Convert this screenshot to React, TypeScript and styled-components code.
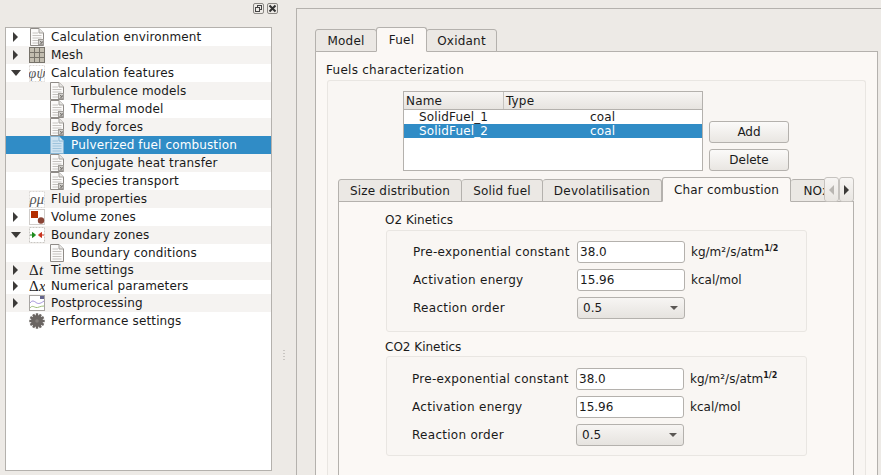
import React, { FC, ReactElement } from 'react';
import styled, { createGlobalStyle } from 'styled-components';

const GlobalStyle = createGlobalStyle`
  html, body {
    margin: 0;
    padding: 0;
    width: 881px;
    height: 475px;
    overflow: hidden;
    background: #edeae6;
  }
  body, input, button {
    font-family: 'DejaVu Sans', Verdana, sans-serif;
    font-size: 12px;
    color: #1a1a1a;
  }
`;

type IconName = 'doc' | 'docPlain' | 'docSelected' | 'grid' | 'phi' | 'rho' | 'volume' | 'boundary' | 'time' | 'numeric' | 'post' | 'gear';

const Gear = () => {
  const teeth = Array.from({ length: 12 }, (_, i) => i * 30);
  return (
    <svg width="16" height="16" viewBox="0 0 16 16">
      {teeth.map((deg) => (
        <rect key={deg} x="6.8" y="0.3" width="2.4" height="3.2" fill="#6a6562" transform={`rotate(${deg} 8 8)`} />
      ))}
      <circle cx="8" cy="8" r="6" fill="#6a6562" />
      <circle cx="8" cy="8" r="1.8" fill="#827d79" />
    </svg>
  );
};

const TreeIcon: FC<{ name: IconName }> = ({ name }): ReactElement => {
  if (name === 'gear') return <Gear />;
  if (name === 'doc' || name === 'docPlain' || name === 'docSelected') {
    const selected = name === 'docSelected';
    const line = selected ? '#9dc3dc' : '#c6c3c0';
    return (
      <svg width="16" height="18" viewBox="0 0 16 18">
        <path d="M1.5 .5H10L14.5 5V17.5H1.5Z" fill={selected ? '#cfe3f1' : '#fbfaf9'} stroke={selected ? '#86b4d3' : '#8f8b87'} />
        <path d="M10 .5V5H14.5" fill={selected ? '#e3eff7' : '#e8e6e3'} stroke={selected ? '#86b4d3' : '#a5a29e'} />
        <path d="M3.5 5H9M3.5 7.5H12.5M3.5 10H12.5M3.5 12.5H12.5M3.5 15H12.5" stroke={line} />
        {name === 'doc' && (
          <g>
            <rect x="9.5" y="11.5" width="5" height="5" fill="#d4d2cf" stroke="#a09d99" />
            <path d="M10.8 12.8L13 15M13.2 13V15.2H11" fill="none" stroke="#7a7773" />
          </g>
        )}
      </svg>
    );
  }
  if (name === 'grid') {
    return (
      <svg width="16" height="16" viewBox="0 0 16 16">
        <rect x=".5" y=".5" width="15" height="15" fill="#c2bdb0" stroke="#77736b" />
        <path d="M5.5 1V15M10.5 1V15M1 5.5H15M1 10.5H15" stroke="#77736b" />
      </svg>
    );
  }
  if (name === 'phi' || name === 'rho') {
    return (
      <svg width="16" height="17" viewBox="0 0 16 17">
        <rect x=".5" y=".5" width="15" height="16" fill="#fff" stroke="#dcd9d6" strokeDasharray="2 1" />
        <text x="8" y="12.5" textAnchor="middle" fontFamily="'Liberation Serif', serif" fontStyle="italic" fontSize="14.5" fill="#555">
          {name === 'phi' ? 'φψ' : 'ρμ'}
        </text>
      </svg>
    );
  }
  if (name === 'volume') {
    return (
      <svg width="16" height="16" viewBox="0 0 16 16">
        <rect x=".5" y=".5" width="15" height="15" fill="#fff" stroke="#d0cdca" />
        <rect x="2" y="2" width="7" height="7" fill="#b32d00" />
        <circle cx="12" cy="11.5" r="3.2" fill="#8a4436" />
      </svg>
    );
  }
  if (name === 'boundary') {
    return (
      <svg width="16" height="16" viewBox="0 0 16 16">
        <rect x=".5" y=".5" width="15" height="15" fill="#fff" stroke="#c9c6c3" strokeDasharray="2 1" />
        <path d="M1 8H4M3.5 5.5L6.5 8L3.5 10.5Z" stroke="#1c8a1c" fill="#1c8a1c" />
        <path d="M12 8H15M12.5 5.5L9.5 8L12.5 10.5Z" stroke="#c8321e" fill="#c8321e" />
      </svg>
    );
  }
  if (name === 'post') {
    return (
      <svg width="16" height="16" viewBox="0 0 16 16">
        <rect x=".5" y=".5" width="15" height="15" fill="#fff" stroke="#a8a5a2" />
        <rect x="11" y="1" width="4" height="3" fill="#64648c" />
        <path d="M1 8C3 5 5 6 7 7.5S11 9 15 6" fill="none" stroke="#9f8fd8" />
        <path d="M1 13C3 10 5 12 7 12.5S11 11 15 11" fill="none" stroke="#9fbf7a" />
      </svg>
    );
  }
  return (
    <svg width="16" height="16" viewBox="0 0 16 16">
      <text x="0" y="13" fontFamily="'Liberation Serif', serif" fontSize="15" fill="#222">Δ</text>
      <text x="10" y="13" fontFamily="'Liberation Serif', serif" fontStyle="italic" fontSize="15" fill="#222">
        {name === 'time' ? 't' : 'x'}
      </text>
    </svg>
  );
};

type TreeEntry = {
  label: string;
  icon: IconName;
  depth?: number;
  arrow?: 'open' | 'closed';
  selected?: boolean;
  height?: number;
  lift?: number;
};

const entries: TreeEntry[] = [
  { label: 'Calculation environment', icon: 'doc', arrow: 'closed' },
  { label: 'Mesh', icon: 'grid', arrow: 'closed' },
  { label: 'Calculation features', icon: 'phi', arrow: 'open' },
  { label: 'Turbulence models', icon: 'doc', depth: 1 },
  { label: 'Thermal model', icon: 'doc', depth: 1 },
  { label: 'Body forces', icon: 'doc', depth: 1 },
  { label: 'Pulverized fuel combustion', icon: 'docSelected', depth: 1, selected: true },
  { label: 'Conjugate heat transfer', icon: 'doc', depth: 1 },
  { label: 'Species transport', icon: 'doc', depth: 1 },
  { label: 'Fluid properties', icon: 'rho' },
  { label: 'Volume zones', icon: 'volume', arrow: 'closed' },
  { label: 'Boundary zones', icon: 'boundary', arrow: 'open' },
  { label: 'Boundary conditions', icon: 'docPlain', depth: 1 },
  { label: 'Time settings', icon: 'time', arrow: 'closed', lift: 3 },
  { label: 'Numerical parameters', icon: 'numeric', arrow: 'closed', height: 14, lift: 3 },
  { label: 'Postprocessing', icon: 'post', arrow: 'closed' },
  { label: 'Performance settings', icon: 'gear' },
];

const FieldRows: FC = () => (
  <>
    <FieldRow>
      <FieldLabel>Pre-exponential constant</FieldLabel>
      <TextBox defaultValue="38.0" />
      <Unit>
        kg/m²/s/atm<Sup>1/2</Sup>
      </Unit>
    </FieldRow>
    <FieldRow>
      <FieldLabel>Activation energy</FieldLabel>
      <TextBox defaultValue="15.96" />
      <Unit>kcal/mol</Unit>
    </FieldRow>
    <FieldRow>
      <FieldLabel>Reaction order</FieldLabel>
      <Combo>
        0.5
        <ComboArrow />
      </Combo>
    </FieldRow>
  </>
);

const App: FC = (): ReactElement => (
  <Page>
    <GlobalStyle />
    <Dock>
      <DockTitle>
        <DockButton>
          <svg width="9" height="9" viewBox="0 0 9 9">
            <rect x="3.5" y="1.5" width="4" height="4" fill="none" stroke="#444" />
            <rect x="1.5" y="3.5" width="4" height="4" fill="#edeae6" stroke="#444" />
          </svg>
        </DockButton>
        <DockButton>
          <svg width="9" height="9" viewBox="0 0 9 9">
            <path d="M1.5 1.5L7.5 7.5M7.5 1.5L1.5 7.5" stroke="#333" strokeWidth="2" />
          </svg>
        </DockButton>
      </DockTitle>
      <Tree>
        {entries.map((entry, index) => (
          <TreeRow
            key={entry.label}
            $alt={index % 2 === 1}
            $selected={entry.selected}
            $depth={entry.depth ?? 0}
            $height={entry.height ?? 18}
            $lift={entry.lift ?? 0}
          >
            <ArrowSlot>{entry.arrow && <TreeArrow $open={entry.arrow === 'open'} />}</ArrowSlot>
            <IconSlot>
              <TreeIcon name={entry.icon} />
            </IconSlot>
            <span>{entry.label}</span>
          </TreeRow>
        ))}
      </Tree>
    </Dock>
    <Splitter>
      <SplitterDots />
    </Splitter>
    <Main>
      <TabBar>
        <Tab $width={62}>Model</Tab>
        <Tab $width={51} $active>
          Fuel
        </Tab>
        <Tab $width={71}>Oxidant</Tab>
      </TabBar>
      <Pane>
        <PaneTitle>Fuels characterization</PaneTitle>
        <FuelsBox>
          <FuelsTop>
            <Table>
              <TableHead>
                <NameHeader>Name</NameHeader>
                <TypeHeader>Type</TypeHeader>
              </TableHead>
              <TableRow>
                <NameCell>SolidFuel_1</NameCell>
                <span>coal</span>
              </TableRow>
              <TableRow $selected>
                <NameCell>SolidFuel_2</NameCell>
                <span>coal</span>
              </TableRow>
            </Table>
            <Buttons>
              <PushButton>Add</PushButton>
              <PushButton>Delete</PushButton>
            </Buttons>
          </FuelsTop>
          <InnerTabs>
            <TabStrip>
              <InnerTab $width={124}>Size distribution</InnerTab>
              <InnerTab $width={81}>Solid fuel</InnerTab>
              <InnerTab $width={119}>Devolatilisation</InnerTab>
              <InnerTab $width={129} $active>
                Char combustion
              </InnerTab>
              <InnerTab $width={52}>NOx</InnerTab>
            </TabStrip>
            <ScrollButton>
              <ScrollArrow $disabled />
            </ScrollButton>
            <ScrollButton>
              <ScrollArrow />
            </ScrollButton>
          </InnerTabs>
          <InnerPane>
            <GroupTitle $first>O2 Kinetics</GroupTitle>
            <KineticsBox>
              <FieldRows />
            </KineticsBox>
            <GroupTitle>CO2 Kinetics</GroupTitle>
            <KineticsBox $second>
              <FieldRows />
            </KineticsBox>
          </InnerPane>
        </FuelsBox>
      </Pane>
    </Main>
  </Page>
);

const Page = styled.div`
  display: flex;
  width: 881px;
  height: 475px;
  overflow: hidden;
  background: #edeae6;
`;

const Dock = styled.div`
  display: flex;
  flex-direction: column;
  width: 272px;
  height: 471px;
  padding-left: 5px;
  box-sizing: border-box;
  flex: none;
`;

const DockTitle = styled.div`
  display: flex;
  justify-content: flex-end;
  gap: 3px;
  height: 27px;
  padding-top: 3px;
  margin-right: -6px;
  box-sizing: border-box;
`;

const DockButton = styled.div`
  width: 11px;
  height: 11px;
  border: 1px solid #8a8783;
  border-radius: 2px;
  box-sizing: border-box;
  display: flex;
  align-items: center;
  justify-content: center;
`;

const Tree = styled.div`
  flex: 1;
  background: #fff;
  border: 1px solid #b4b1ad;
  box-sizing: border-box;
  letter-spacing: 0.14px;
`;

const TreeRow = styled.div<{ $alt: boolean; $selected?: boolean; $depth: number; $height: number; $lift: number }>`
  display: flex;
  align-items: center;
  height: ${(p) => p.$height}px;
  padding-left: ${(p) => p.$depth * 20}px;
  padding-bottom: ${(p) => p.$lift}px;
  box-sizing: border-box;
  background: ${(p) => (p.$selected ? '#308cc6' : p.$alt ? '#f5f3f1' : '#fff')};
  color: ${(p) => (p.$selected ? '#fff' : '#1a1a1a')};
  white-space: nowrap;
`;

const ArrowSlot = styled.div`
  display: flex;
  align-items: center;
  justify-content: center;
  width: 22px;
  height: 100%;
  padding-right: 3px;
  box-sizing: border-box;
  flex: none;
`;

const TreeArrow = styled.div<{ $open: boolean }>`
  width: 0;
  height: 0;
  border-style: solid;
  border-color: transparent;
  ${(p) =>
    p.$open
      ? 'border-width: 6px 5px 0 5px; border-top-color: #3c3a38;'
      : 'border-width: 5px 0 5px 5px; border-left-color: #3c3a38;'}
`;

const IconSlot = styled.div`
  display: flex;
  align-items: center;
  justify-content: center;
  width: 18px;
  height: 18px;
  margin-right: 5px;
  flex: none;
`;

const Splitter = styled.div`
  display: flex;
  align-items: center;
  justify-content: center;
  width: 24px;
  height: 475px;
  padding-top: 236px;
  box-sizing: border-box;
  flex: none;
`;

const SplitterDots = styled.div`
  width: 2px;
  height: 12px;
  background: repeating-linear-gradient(to bottom, #c9c6c2 0 1px, transparent 1px 3px);
`;

const Main = styled.div`
  flex: 1;
  display: flex;
  flex-direction: column;
  margin-top: 8px;
  padding: 19px 3px 0 18px;
  border-top: 1px solid #b4b1ad;
  border-left: 1px solid #b4b1ad;
  min-width: 0;
`;

const TabBar = styled.div`
  display: flex;
  align-items: flex-end;
  height: 24px;
  margin-bottom: -1px;
  flex: none;
  letter-spacing: 0.2px;
`;

const Tab = styled.div<{ $active?: boolean; $width: number }>`
  position: relative;
  z-index: ${(p) => (p.$active ? 1 : 0)};
  display: flex;
  align-items: center;
  justify-content: center;
  width: ${(p) => p.$width}px;
  height: ${(p) => (p.$active ? 25 : 23)}px;
  box-sizing: border-box;
  border: 1px solid #b4b1ad;
  border-bottom: ${(p) => (p.$active ? '1px solid #fbf8f5' : '1px solid #b4b1ad')};
  border-radius: 3px 3px 0 0;
  background: ${(p) => (p.$active ? '#fbf8f5' : '#ebe8e4')};
  margin-left: ${(p) => (p.$active ? '-1px' : '0')};
  margin-right: ${(p) => (p.$active ? '-1px' : '0')};
`;

const Pane = styled.div`
  flex: 1;
  display: flex;
  flex-direction: column;
  min-height: 0;
  padding: 10px 11px 0 11px;
  background: #fbf8f5;
  border: 1px solid #b4b1ad;
  border-bottom: none;
`;

const PaneTitle = styled.div`
  height: 18px;
  line-height: 16px;
  margin-left: -1px;
  letter-spacing: 0.27px;
`;

const FuelsBox = styled.div`
  flex: 1;
  display: flex;
  flex-direction: column;
  padding: 10px 11px 0 10px;
  border: 1px solid #e9e6e2;
  border-bottom: none;
  border-radius: 3px 3px 0 0;
  background: #f9f6f3;
`;

const FuelsTop = styled.div`
  display: flex;
  align-items: flex-end;
  gap: 6px;
  padding-left: 65px;
  flex: none;
`;

const Table = styled.div`
  width: 300px;
  height: 80px;
  box-sizing: border-box;
  background: #fff;
  border: 1px solid #b4b1ad;
  letter-spacing: 0.15px;
`;

const TableHead = styled.div`
  display: flex;
  height: 17px;
  line-height: 18px;
  background: linear-gradient(#f7f5f3, #e7e4e0);
  border-bottom: 1px solid #b4b1ad;
`;

const NameHeader = styled.div`
  width: 100px;
  padding-left: 2px;
  box-sizing: border-box;
  border-right: 1px solid #c6c3bf;
`;

const TypeHeader = styled.div`
  padding-left: 2px;
`;

const TableRow = styled.div<{ $selected?: boolean }>`
  display: flex;
  height: 14px;
  line-height: 14px;
  background: ${(p) => (p.$selected ? '#308cc6' : '#fff')};
  color: ${(p) => (p.$selected ? '#fff' : '#1a1a1a')};
`;

const NameCell = styled.span`
  width: 186px;
  padding-left: 15px;
  box-sizing: border-box;
`;

const Buttons = styled.div`
  display: flex;
  flex-direction: column;
  gap: 6px;
`;

const PushButton = styled.button`
  width: 80px;
  height: 22px;
  padding: 0;
  border: 1px solid #b4b1ad;
  border-radius: 3px;
  background: linear-gradient(#fbfaf9, #e9e6e2);
`;

const InnerTabs = styled.div`
  display: flex;
  align-items: flex-end;
  height: 25px;
  margin: 6px 0 -1px 0;
  flex: none;
  position: relative;
  z-index: 1;
  letter-spacing: 0.2px;
`;

const TabStrip = styled.div`
  display: flex;
  align-items: flex-end;
  flex: 1;
  min-width: 0;
  height: 100%;
  overflow: hidden;
`;

const InnerTab = styled.div<{ $width: number; $active?: boolean }>`
  display: flex;
  align-items: center;
  justify-content: center;
  width: ${(p) => p.$width}px;
  height: ${(p) => (p.$active ? 25 : 23)}px;
  box-sizing: border-box;
  flex: none;
  white-space: nowrap;
  border: 1px solid #b4b1ad;
  border-left: ${(p) => (p.$active ? '1px solid #b4b1ad' : 'none')};
  border-bottom-color: ${(p) => (p.$active ? '#fbf8f5' : '#b4b1ad')};
  border-radius: 3px 3px 0 0;
  background: ${(p) => (p.$active ? '#fbf8f5' : '#ebe8e4')};
  &:first-child {
    border-left: 1px solid #b4b1ad;
  }
`;

const ScrollButton = styled.div`
  display: flex;
  align-items: center;
  justify-content: center;
  width: 15px;
  height: 25px;
  box-sizing: border-box;
  flex: none;
  border: 1px solid #c6c3bf;
  border-radius: 3px;
  background: linear-gradient(#f7f5f3, #e9e6e2);
`;

const ScrollArrow = styled.div<{ $disabled?: boolean }>`
  width: 0;
  height: 0;
  border-style: solid;
  border-color: transparent;
  ${(p) =>
    p.$disabled
      ? 'border-width: 5px 5px 5px 0; border-right-color: #b9b6b2;'
      : 'border-width: 5px 0 5px 5px; border-left-color: #3c3a38;'}
`;

const InnerPane = styled.div`
  flex: 1;
  padding: 10px 0 0 47px;
  background: #fbf8f5;
  border: 1px solid #b4b1ad;
  border-bottom: none;
  min-height: 0;
`;

const GroupTitle = styled.div<{ $first?: boolean }>`
  height: 18px;
  line-height: 16px;
  margin-left: -1px;
  padding-top: ${(p) => (p.$first ? 0 : 1)}px;
  box-sizing: border-box;
`;

const KineticsBox = styled.div<{ $second?: boolean }>`
  display: flex;
  flex-direction: column;
  gap: 6px;
  width: 421px;
  height: ${(p) => (p.$second ? 100 : 102)}px;
  margin-bottom: 6px;
  padding: ${(p) => (p.$second ? '11px 0 0 25px' : '10px 0 0 26px')};
  box-sizing: border-box;
  border: 1px solid #e9e6e2;
  border-radius: 3px;
  background: #f9f6f3;
`;

const FieldRow = styled.div`
  display: flex;
  align-items: center;
  height: 22px;
`;

const FieldLabel = styled.div`
  width: 164px;
  flex: none;
  letter-spacing: 0.28px;
  white-space: nowrap;
`;

const TextBox = styled.input`
  width: 108px;
  height: 22px;
  padding: 0 2px;
  box-sizing: border-box;
  background: #fff;
  border: 1px solid #b4b1ad;
  border-radius: 3px;
  outline: none;
`;

const Unit = styled.div`
  margin-left: 6px;
`;

const Sup = styled.sup`
  font-size: 8px;
  font-weight: 600;
  line-height: 0;
`;

const Combo = styled.div`
  display: flex;
  align-items: center;
  justify-content: space-between;
  width: 108px;
  height: 22px;
  padding: 0 6px 0 5px;
  box-sizing: border-box;
  border: 1px solid #b4b1ad;
  border-radius: 3px;
  background: linear-gradient(#f7f5f3, #e6e3df);
`;

const ComboArrow = styled.div`
  width: 0;
  height: 0;
  border-style: solid;
  border-color: transparent;
  border-width: 4px 4px 0 4px;
  border-top-color: #5a5754;
`;

export default App;
